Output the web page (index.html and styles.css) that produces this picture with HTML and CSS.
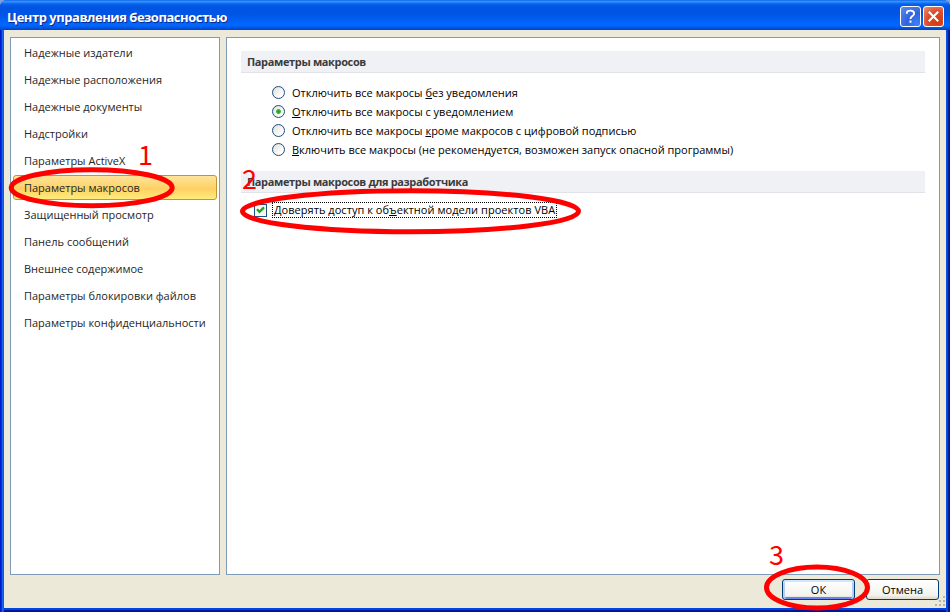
FILE: index.html
```html
<!DOCTYPE html>
<html lang="ru">
<head>
<meta charset="utf-8">
<title>Центр управления безопасностью</title>
<link rel="stylesheet" href="styles.css">
</head>
<body>
<div class="window">
  <header class="titlebar">
    <h1>Центр управления безопасностью</h1>
    <button class="caption help" aria-label="Справка"><svg width="21" height="21" viewBox="0 0 21 21"><path d="M6.5 7.5V6.2C6.5 4.8 8 4 10.4 4s4.1 1 4.1 3.1c0 3-4 2.9-4 6.1M10.5 15v2.4" fill="none" stroke="#fff" stroke-width="2.1"/></svg></button>
    <button class="caption close" aria-label="Закрыть"><svg width="21" height="21" viewBox="0 0 21 21"><path d="M5.3 5.3l10.4 10.4M15.7 5.3L5.3 15.7" stroke="#fff" stroke-width="2.3"/></svg></button>
  </header>
  <div class="client">
    <div class="panes">
      <nav class="sidebar">
        <a><span>Надежные издатели</span></a>
        <a><span>Надежные расположения</span></a>
        <a><span>Надежные документы</span></a>
        <a><span>Надстройки</span></a>
        <a><span>Параметры ActiveX</span></a>
        <a class="selected"><span>Параметры макросов</span></a>
        <a><span>Защищенный просмотр</span></a>
        <a><span>Панель сообщений</span></a>
        <a><span>Внешнее содержимое</span></a>
        <a><span>Параметры блокировки файлов</span></a>
        <a><span>Параметры конфиденциальности</span></a>
      </nav>
      <main class="content">
        <h2>Параметры макросов</h2>
        <div class="options">
          <label><i class="radio"></i><span>Отключить все макросы <u>б</u>ез уведомления</span></label>
          <label><i class="radio on"></i><span><u>О</u>тключить все макросы с уведомлением</span></label>
          <label><i class="radio"></i><span>Отключить все макросы <u>к</u>роме макросов с цифровой подписью</span></label>
          <label><i class="radio"></i><span><u>В</u>ключить все макросы (не рекомендуется, возможен запуск опасной программы)</span></label>
        </div>
        <h2>Параметры макросов для разработчика</h2>
        <label class="check"><i class="box"><svg width="11" height="11" viewBox="0 0 11 11"><path d="M2 4.3l2.5 2.6L9 2.4" fill="none" stroke="#21a121" stroke-width="2.3"/></svg></i><span class="focus">Доверять доступ к об<u>ъ</u>ектной модели проектов VBA</span></label>
      </main>
    </div>
    <footer>
      <button class="btn default">ОК</button>
      <button class="btn">Отмена</button>
    </footer>
  </div>
  <svg class="grip" width="12" height="12" viewBox="0 0 12 12"><path d="M9 1h2M5 5h2M9 5h2M1 9h2M5 9h2M9 9h2" stroke="#b8b4a2" stroke-width="2"/></svg>
</div>
<svg class="marks" width="950" height="612" viewBox="0 0 950 612">
  <g fill="none" stroke="#f00" stroke-width="5">
    <ellipse cx="91.7" cy="187.7" rx="80.5" ry="18"/>
    <ellipse cx="410.5" cy="211.3" rx="168" ry="20.5"/>
    <ellipse cx="817" cy="587.5" rx="50.5" ry="20.5"/>
  </g>
</svg>
<b class="step one">1</b><b class="step two">2</b><b class="step three">3</b>
</body>
</html>
```
FILE: styles.css
```css
* { box-sizing: border-box; }
body { margin: 0; width: 950px; height: 612px; overflow: hidden; position: relative; background: #7f9fe0; font: 11px/15px "Open Sans", sans-serif; color: #000; }
button { font: inherit; color: inherit; padding: 0; }
.window { position: relative; width: 950px; height: 612px; display: flex; flex-direction: column; padding: 0 4px 4px; border-radius: 7px 7px 0 0; overflow: hidden;
  background: linear-gradient(90deg, #0018cc 0, #0018cc 1px, #0831d9 1px, #0831d9 2px, #166aee 2px, #0855dd 4px, transparent 4px, transparent 946px, #0855dd 946px, #0441d8 948px, #001da0 948px, #00138c 950px),
  linear-gradient(#0855dd 0, #0855dd 608px, #0046e4 608px, #0046e4 610px, #00189c 610px, #00138c 612px); }
.titlebar { flex: none; height: 30px; margin: 0 -4px; padding: 2px 6px 0 7px; display: flex; align-items: center; gap: 2px;
  background: linear-gradient(#0058e0 0, #3a93ff 1px, #288eff 2px, #0a60ea 4px, #0054e3 7px, #0055e5 14px, #005ff5 20px, #0068ff 25px, #005df0 27px, #0040c8 30px); }
.titlebar h1 { flex: 1; margin: 0; padding-top: 2px; color: #fff; font: bold 13px/20px "Open Sans", sans-serif; letter-spacing: -.48px; white-space: nowrap; text-shadow: 1px 1px 0 #0b2a8a; }
.caption { width: 21px; height: 21px; border: 1px solid #fff; border-radius: 3px; display: flex; align-items: center; justify-content: center; }
.help { background: radial-gradient(circle at 85% 90%, #3b80ff, #2f62dd 45%, #5f8cf0 100%); }
.close { background: radial-gradient(circle at 70% 75%, #d7390c, #dc4c29 50%, #ee9277 100%); }
.client { flex: 1; display: flex; flex-direction: column; background: #ece9d8; padding: 7px 6px 0; }
.panes { height: 538px; display: flex; gap: 6px; }
.sidebar, .content { background: #fff; border: 1px solid #7f9db9; }
.sidebar { width: 210px; padding: 2px; }
.sidebar a { display: flex; align-items: center; height: 25px; margin-bottom: 2px; padding-left: 10px; border: 1px solid transparent; color: #262626; white-space: nowrap; }
.sidebar .selected { border-color: #c09432; border-radius: 3px; background: linear-gradient(#fee49b 0, #fed878 35%, #fed062 55%, #ffec7c 100%); }
.content { flex: 1; padding: 13px 14px; }
h2 { margin: 0; height: 22px; padding-left: 6px; background: #f0f1f5; border-bottom: 1px solid #e2e3e8; color: #3b3b3b; font: bold 11px/21px "Open Sans", sans-serif; letter-spacing: -.36px; white-space: nowrap; }
.options { padding: 10px 0 12px 31px; height: 98px; }
.options label { display: flex; align-items: center; height: 19px; gap: 7px; white-space: nowrap; }
u { text-decoration-thickness: 1px; text-underline-offset: 1px; text-decoration-skip-ink: none; }
.radio { flex: none; width: 13px; height: 13px; border: 1px solid #1d4c7c; border-radius: 50%; background: linear-gradient(135deg, #dcdcd7, #fff 75%); }
.radio.on { background: radial-gradient(circle, #21a121 0, #35b835 2px, transparent 2.8px), linear-gradient(135deg, #e3e3de, #fff); }
.check { display: flex; align-items: center; gap: 5px; margin: 9px 0 0 13px; height: 16px; letter-spacing: .04px; }
.box { width: 13px; height: 13px; border: 1px solid #1c5180; background: #f7f7f4; display: flex; }
.focus { width: 285px; height: 16px; line-height: 14px; padding-left: 1px; border: 1px dotted #000; white-space: nowrap; }
footer { display: flex; justify-content: flex-end; gap: 11px; padding: 4px 1px 0 0; }
.btn { width: 73px; height: 21px; border: 1px solid #003c74; border-radius: 3px; background: linear-gradient(#fff, #f3f3ee 80%, #dbd8cc); }
.default { box-shadow: inset 0 2px #cee7ff, inset 2px 0 #b7cdf3, inset -2px 0 #b7cdf3, inset 0 -2px #6982ee; }
.grip { position: absolute; right: 4px; bottom: 4px; }
.marks { position: absolute; left: 0; top: 0; }
.step { position: absolute; color: #f00; font: 27px/28px "Noto Sans CJK SC", sans-serif; }
.one { left: 138px; top: 140px; }
.two { left: 242px; top: 164px; }
.three { left: 769px; top: 540px; }
```
